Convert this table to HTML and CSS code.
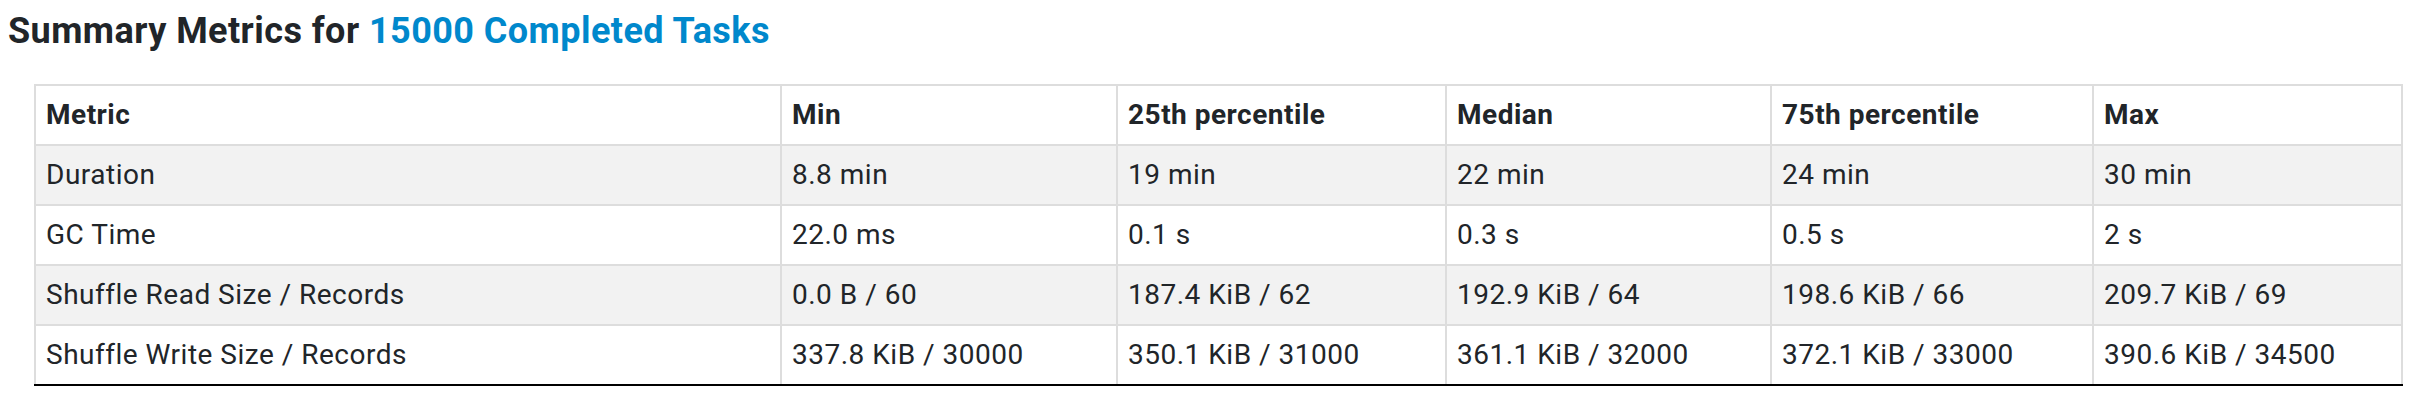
FILE: index.html
```html
<!DOCTYPE html>
<html>
<head>
<meta charset="utf-8">
<link rel="stylesheet" href="styles.css">
</head>
<body>
<h4 class="title">Summary Metrics for <a class="link" href="#">15000 Completed Tasks</a></h4>
<table class="metrics">
  <colgroup>
    <col class="c1"><col class="c2"><col class="c3"><col class="c4"><col class="c5"><col class="c6">
  </colgroup>
  <thead>
    <tr><th>Metric</th><th>Min</th><th>25th percentile</th><th>Median</th><th>75th percentile</th><th>Max</th></tr>
  </thead>
  <tbody>
    <tr class="odd"><td>Duration</td><td>8.8 min</td><td>19 min</td><td>22 min</td><td>24 min</td><td>30 min</td></tr>
    <tr><td>GC Time</td><td>22.0 ms</td><td>0.1 s</td><td>0.3 s</td><td>0.5 s</td><td>2 s</td></tr>
    <tr class="odd"><td>Shuffle Read Size / Records</td><td>0.0 B / 60</td><td>187.4 KiB / 62</td><td>192.9 KiB / 64</td><td>198.6 KiB / 66</td><td>209.7 KiB / 69</td></tr>
    <tr class="last"><td>Shuffle Write Size / Records</td><td>337.8 KiB / 30000</td><td>350.1 KiB / 31000</td><td>361.1 KiB / 32000</td><td>372.1 KiB / 33000</td><td>390.6 KiB / 34500</td></tr>
  </tbody>
</table>
</body>
</html>
```
FILE: styles.css
```css
html, body {
  margin: 0;
  padding: 0;
  background: #fff;
}
body {
  font-family: Roboto, "Liberation Sans", sans-serif;
  color: #212529;
  padding: 0 8px;
}
.title {
  margin: 0;
  padding-top: 9px;
  font-size: 36px;
  line-height: 44px;
  font-weight: 700;
  letter-spacing: 0.45px;
  color: #212529;
}
.link {
  color: #0088cc;
  text-decoration: none;
}
.metrics {
  margin-top: 31px;
  margin-left: 26px;
  border-collapse: collapse;
  table-layout: fixed;
  width: 2369px;
  font-size: 28px;
  line-height: 40px;
  letter-spacing: 0.5px;
}
.c1 { width: 746px; }
.c2 { width: 336px; }
.c3 { width: 329px; }
.c4 { width: 325px; }
.c5 { width: 322px; }
.c6 { width: 309px; }
.metrics th, .metrics td {
  border: 2px solid #dddddd;
  padding: 9px 10px 9px 10px;
  text-align: left;
  white-space: nowrap;
}
.metrics th {
  font-weight: 700;
}
.metrics tr.odd td {
  background: #f2f2f2;
}
.metrics tr.last td {
  border-bottom: 2px solid #000;
}
```
